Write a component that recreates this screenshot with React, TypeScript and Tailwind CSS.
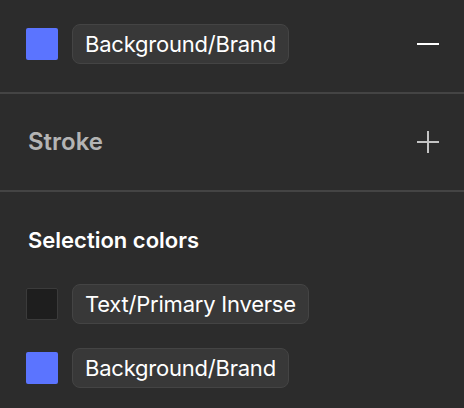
type Swatch = { name: string; dark?: boolean };

function ColorRow({ name, dark }: Swatch) {
  return (
    <div className="flex items-center gap-[14px]">
      <div
        className={
          dark
            ? "w-8 h-8 rounded-[2px] border border-[#3b3b3b] bg-[#1e1e1e]"
            : "w-8 h-8 rounded-[2px] bg-[#5b74ff]"
        }
      />
      <div className="h-10 flex items-center px-3 rounded-lg border-[1.5px] border-[#444444] bg-[#383838] text-[22px] text-white leading-none tracking-[-0.01em]">
        {name}
      </div>
    </div>
  );
}

export default function App() {
  return (
    <div className="w-[464px] h-[408px] overflow-hidden bg-[#2c2c2c] font-['Inter',sans-serif]">
      {/* fill */}
      <div className="h-[94px] border-b-2 border-[#444444] pt-6 pl-[26px] pr-[25px] flex items-start justify-between">
        <ColorRow name="Background/Brand" />
        <div className="h-10 flex items-center">
          <div className="w-[22px] h-[2px] bg-white" />
        </div>
      </div>

      {/* stroke */}
      <div className="h-[98px] border-b-2 border-[#444444] pl-7 pr-[25px] flex items-center justify-between">
        <p className="text-[24px] font-semibold text-[#b4b4b4] leading-none">Stroke</p>
        <div className="relative w-[22px] h-[22px]">
          <div className="absolute left-0 top-[10px] w-[22px] h-[2px] bg-[#c4c4c4]" />
          <div className="absolute top-0 left-[10px] w-[2px] h-[22px] bg-[#c4c4c4]" />
        </div>
      </div>

      {/* selection colors */}
      <div className="pt-8 pl-[26px]">
        <p className="h-8 flex items-center pl-[2px] text-[22px] font-semibold text-white leading-none">Selection colors</p>
        <div className="mt-7 flex flex-col gap-6">
          <ColorRow name="Text/Primary Inverse" dark />
          <ColorRow name="Background/Brand" />
        </div>
      </div>
    </div>
  );
}
